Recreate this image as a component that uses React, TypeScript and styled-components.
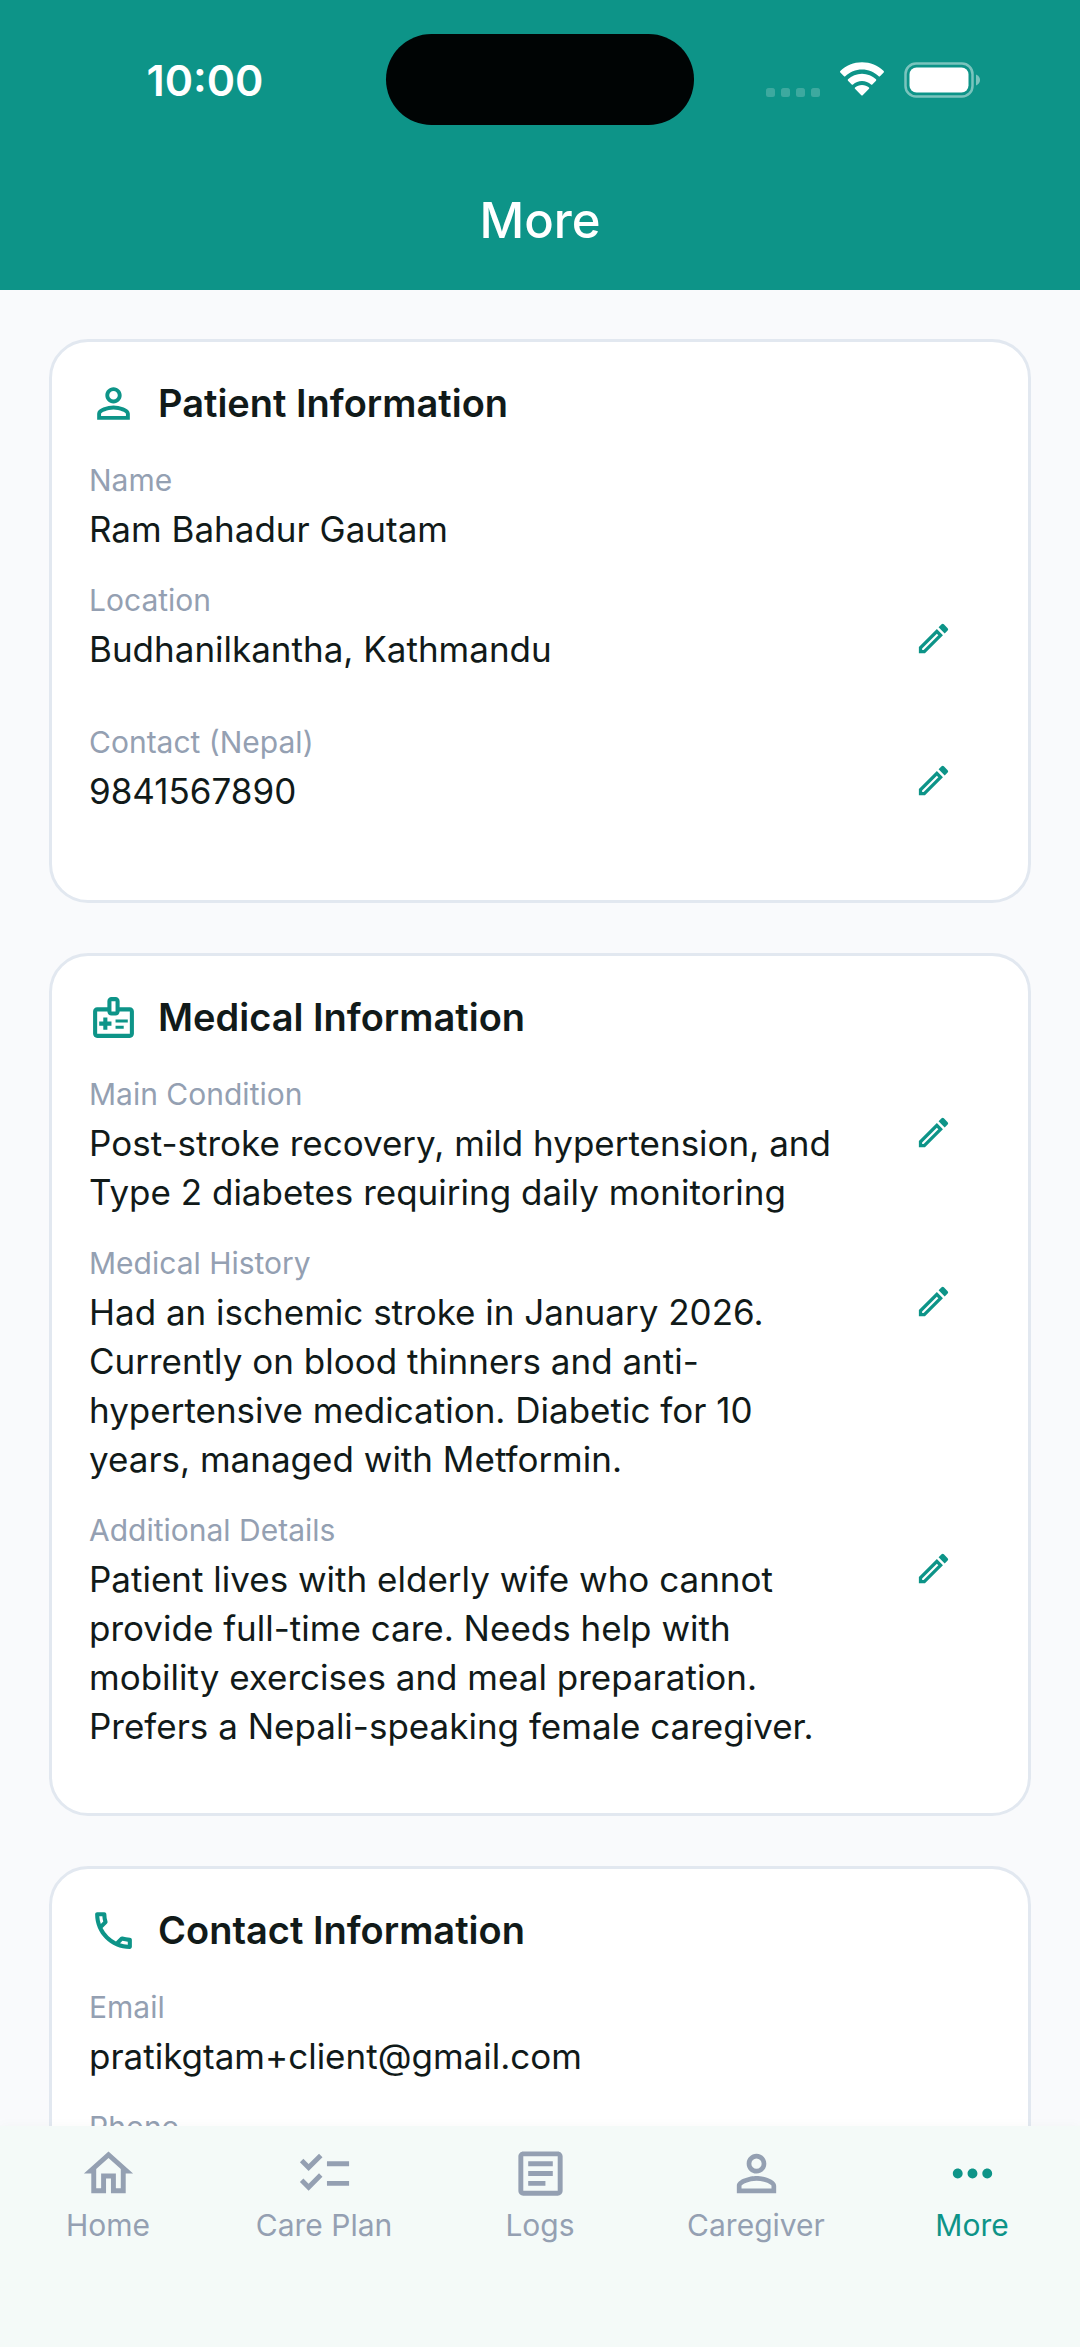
import React from "react";
import styled, { createGlobalStyle } from "styled-components";
import {
  MdChecklist,
  MdMoreHoriz,
  MdOutlineArticle,
  MdOutlineHome,
  MdOutlineMedicalInformation,
  MdOutlineModeEdit,
  MdOutlinePhone,
  MdPersonOutline,
} from "react-icons/md";
import type { IconType } from "react-icons";

const teal = "#0d9488";
const ink = "#111a19";
const muted = "#94a0b2";
const border = "#e2e8f0";

const GlobalStyle = createGlobalStyle`
  * { box-sizing: border-box; }
  body {
    margin: 0;
    background: #f9fafc;
    color: ${ink};
    font-family: Inter, "Liberation Sans", sans-serif;
  }
  h1, h2, dl, dt, dd { margin: 0; }
`;

const Screen = styled.div`
  display: flex;
  flex-direction: column;
  height: 100vh;
  overflow: hidden;
`;

const Header = styled.header`
  flex: none;
  background: ${teal};
  color: #fff;
`;

const StatusBar = styled.div`
  display: grid;
  grid-template-columns: 1fr 308px 1fr;
  align-items: center;
  padding-top: 34px;
`;

const Time = styled.time`
  padding-left: 24px;
  text-align: center;
  font-size: 43px;
  line-height: 50px;
  font-weight: 600;
`;

const Island = styled.div`
  height: 91px;
  border-radius: 46px;
  background: #000404;
`;

const Indicators = styled.div`
  display: flex;
  align-items: center;
  justify-content: center;
  gap: 18px;
  padding-right: 27px;
`;

const Title = styled.h1`
  padding: 66px 0 39px;
  text-align: center;
  font-size: 49px;
  line-height: 60px;
  font-weight: 500;
`;

const Content = styled.main`
  flex: 1;
  min-height: 0;
  overflow-y: auto;
  scrollbar-width: none;
  display: flex;
  flex-direction: column;
  gap: 50px;
  padding: 49px;
`;

const Card = styled.section`
  flex: none;
  padding: 37px 37px 35px;
  border: 3px solid ${border};
  border-radius: 39px;
  background: #fff;
`;

const CardHeader = styled.div`
  display: flex;
  align-items: center;
  gap: 20px;
  margin-bottom: 33px;
  color: ${teal};
`;

const CardTitle = styled.h2`
  color: ${ink};
  font-size: 38px;
  line-height: 49px;
  font-weight: 600;
`;

const Row = styled.div`
  display: flex;
  align-items: flex-start;
  gap: 27px;
  margin-bottom: 27px;
`;

const Field = styled.dl`
  flex: 1;
  min-width: 0;
`;

const Label = styled.dt`
  margin-bottom: 5px;
  color: ${muted};
  font-size: 30px;
  line-height: 39px;
`;

const Value = styled.dd`
  font-size: 35px;
  line-height: 49px;
`;

const EditButton = styled.button`
  display: grid;
  place-items: center;
  width: 115px;
  height: 115px;
  padding: 0;
  border: 0;
  background: none;
  color: ${teal};
  cursor: pointer;
`;

const NavBar = styled.nav`
  flex: none;
  display: grid;
  grid-template-columns: repeat(5, 1fr);
  padding: 18px 0 102px;
  background: #f4faf8;
  box-shadow: 0 0 12px rgba(0, 0, 0, 0.03);
`;

const NavLink = styled.a<{ $active?: boolean }>`
  display: flex;
  flex-direction: column;
  align-items: center;
  gap: 3px;
  color: ${(p) => (p.$active ? teal : muted)};
  font-size: 30px;
  line-height: 39px;
  text-decoration: none;
`;

interface FieldData {
  label: string;
  value?: string;
  editable?: boolean;
}

interface Section {
  title: string;
  icon: IconType;
  fields: FieldData[];
}

const sections: Section[] = [
  {
    title: "Patient Information",
    icon: MdPersonOutline,
    fields: [
      { label: "Name", value: "Ram Bahadur Gautam" },
      { label: "Location", value: "Budhanilkantha, Kathmandu", editable: true },
      { label: "Contact (Nepal)", value: "9841567890", editable: true },
    ],
  },
  {
    title: "Medical Information",
    icon: MdOutlineMedicalInformation,
    fields: [
      {
        label: "Main Condition",
        value:
          "Post-stroke recovery, mild hypertension, and Type 2 diabetes requiring daily monitoring",
        editable: true,
      },
      {
        label: "Medical History",
        value:
          "Had an ischemic stroke in January 2026. Currently on blood thinners and anti-hypertensive medication. Diabetic for 10 years, managed with Metformin.",
        editable: true,
      },
      {
        label: "Additional Details",
        value:
          "Patient lives with elderly wife who cannot provide full-time care. Needs help with mobility exercises and meal preparation. Prefers a Nepali-speaking female caregiver.",
        editable: true,
      },
    ],
  },
  {
    title: "Contact Information",
    icon: MdOutlinePhone,
    fields: [
      { label: "Email", value: "pratikgtam+client@gmail.com" },
      { label: "Phone" },
    ],
  },
];

const tabs: { label: string; icon: IconType; active?: boolean }[] = [
  { label: "Home", icon: MdOutlineHome },
  { label: "Care Plan", icon: MdChecklist },
  { label: "Logs", icon: MdOutlineArticle },
  { label: "Caregiver", icon: MdPersonOutline },
  { label: "More", icon: MdMoreHoriz, active: true },
];

const SignalIcon = () => (
  <svg width="54" height="36" viewBox="0 0 54 36" fill="#fff" fillOpacity="0.2">
    {[0, 15, 30, 45].map((x) => (
      <rect key={x} x={x} y="26" width="9" height="9" rx="2.5" />
    ))}
  </svg>
);

const WifiIcon = () => (
  <svg width="48" height="36" viewBox="0 0 48 36" fill="#fff">
    <path d="M24 7.5c6.4 0 12.3 2.5 16.7 6.7.4.4.9.4 1.3 0l3.7-3.8c.4-.4.4-1 0-1.4C39.9 3.5 32.3.3 24 .3S8.1 3.5 2.300 9c-.4.4-.4 1 0 1.4L6 14.200c.4.4.9.4 1.3 0C11.7 10 17.6 7.5 24 7.5z" />
    <path d="M24 19c3.4 0 6.6 1.3 9 3.500.4.4 1 .4 1.300 0l3.700-3.800c.4-.4.4-1.100 0-1.500C34.300 13.800 29.400 11.700 24 11.700s-10.300 2.100-14 5.500c-.4.4-.4 1.100 0 1.500l3.700 3.800c.4.4 1 .4 1.300 0 2.400-2.200 5.600-3.500 9-3.500z" />
    <path d="M31 26.800c.4-.4.4-1 0-1.400-1.900-1.600-4.300-2.500-7-2.500s-5.100.9-7 2.500c-.4.4-.4 1 0 1.400l6.300 6.500c.4.4 1 .4 1.400 0z" />
  </svg>
);

const BatteryIcon = () => (
  <svg width="77" height="36" viewBox="0 0 77 36" fill="none">
    <rect x="1.5" y="1.5" width="67" height="33" rx="10.5" stroke="#fff" strokeOpacity="0.45" strokeWidth="2.5" />
    <path d="M72 12.5c2.600 1 4 3.100 4 5.500s-1.400 4.500-4 5.500z" fill="#fff" fillOpacity="0.45" />
    <rect x="5.500" y="5.500" width="59" height="25" rx="7" fill="#fff" />
  </svg>
);

const FieldRow = ({ label, value, editable }: FieldData) => (
  <Row>
    <Field>
      <Label>{label}</Label>
      {value && <Value>{value}</Value>}
    </Field>
    {editable && (
      <EditButton type="button" aria-label={`Edit ${label}`}>
        <MdOutlineModeEdit size={39} />
      </EditButton>
    )}
  </Row>
);

export default function App() {
  return (
    <>
      <GlobalStyle />
      <Screen>
        <Header>
          <StatusBar>
            <Time>10:00</Time>
            <Island />
            <Indicators>
              <SignalIcon />
              <WifiIcon />
              <BatteryIcon />
            </Indicators>
          </StatusBar>
          <Title>More</Title>
        </Header>
        <Content>
          {sections.map(({ title, icon: Icon, fields }) => (
            <Card key={title}>
              <CardHeader>
                <Icon size={49} />
                <CardTitle>{title}</CardTitle>
              </CardHeader>
              {fields.map((field) => (
                <FieldRow key={field.label} {...field} />
              ))}
            </Card>
          ))}
        </Content>
        <NavBar>
          {tabs.map(({ label, icon: Icon, active }) => (
            <NavLink key={label} href="#" $active={active} aria-current={active ? "page" : undefined}>
              <Icon size={59} />
              {label}
            </NavLink>
          ))}
        </NavBar>
      </Screen>
    </>
  );
}
